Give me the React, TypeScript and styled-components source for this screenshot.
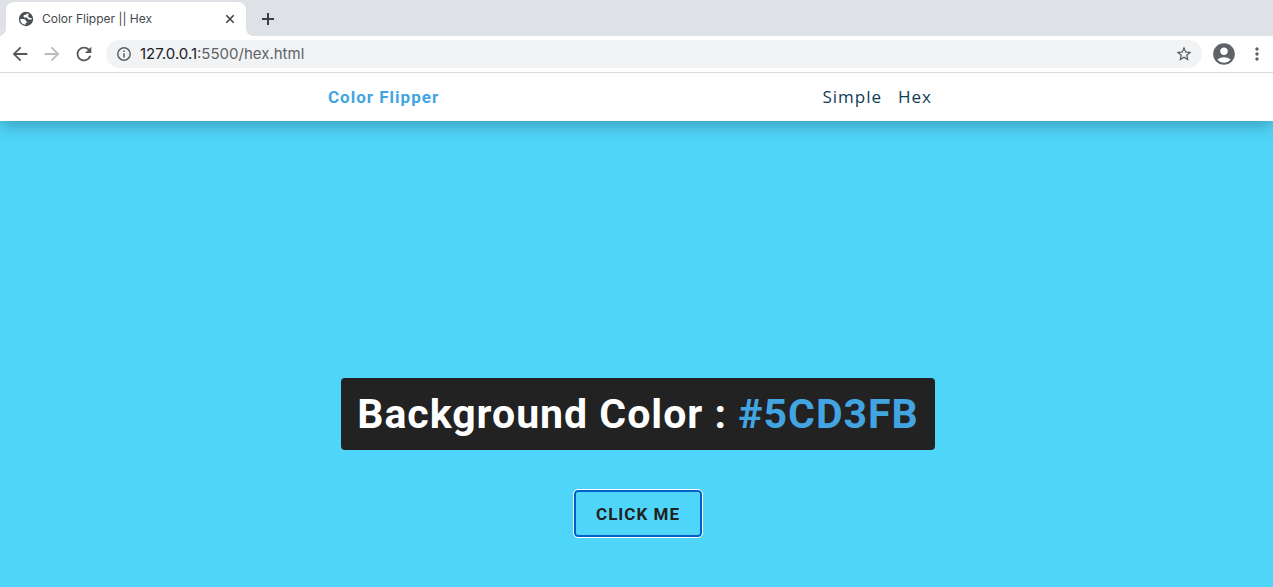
import React, { useState } from 'react';
import styled, { createGlobalStyle } from 'styled-components';
import {
  MdAccountCircle,
  MdArrowBack,
  MdArrowForward,
  MdMoreVert,
  MdRefresh,
  MdStarBorder,
} from 'react-icons/md';

const GlobalStyle = createGlobalStyle`
  *, *::before, *::after { box-sizing: border-box; }
  body { margin: 0; overflow: hidden; background: #50d5fa; }
  button, input { font: inherit; color: inherit; }
`;

const Window = styled.div`
  display: flex;
  flex-direction: column;
  min-height: 100vh;
  font-family: Inter, 'Liberation Sans', sans-serif;
`;

const TabStrip = styled.div`
  display: flex;
  align-items: flex-end;
  gap: 12px;
  height: 36px;
  padding-left: 6px;
  background: #dee1e6;
`;

const Tab = styled.div`
  position: relative;
  display: flex;
  align-items: center;
  gap: 8px;
  width: 240px;
  height: 34px;
  padding: 0 8px 0 12px;
  border-radius: 8px 8px 0 0;
  background: #fff;
  color: #45494d;
  font-size: 12px;
  line-height: 16px;

  &::before,
  &::after {
    content: '';
    position: absolute;
    bottom: 0;
    width: 8px;
    height: 8px;
  }
  &::before {
    right: 100%;
    background: radial-gradient(circle at 0 0, #dee1e6 8px, #fff 8px);
  }
  &::after {
    left: 100%;
    background: radial-gradient(circle at 100% 0, #dee1e6 8px, #fff 8px);
  }
`;

const TabTitle = styled.span`
  flex: 1;
  white-space: nowrap;
`;

const IconButton = styled.button<{ $size: number; $color?: string }>`
  display: flex;
  align-items: center;
  justify-content: center;
  flex: none;
  width: ${(p) => p.$size}px;
  height: ${(p) => p.$size}px;
  padding: 0;
  border: 0;
  background: none;
  color: ${(p) => p.$color ?? '#54585d'};

  svg { flex: none; }
`;

const NewTab = styled(IconButton)`
  align-self: center;
  margin-top: 2px;
`;

const Toolbar = styled.div`
  position: relative;
  z-index: 1;
  display: flex;
  align-items: center;
  height: 37px;
  padding: 0 8px 0 10px;
  border-bottom: 1px solid #dadce0;
  background: #fff;
`;

const ButtonGroup = styled.div`
  display: flex;
  align-items: center;
  gap: 12px;
`;

const AddressBar = styled.div`
  display: flex;
  align-items: center;
  flex: 1;
  height: 28px;
  margin: 0 9px 0 12px;
  padding: 0 8px 0 10px;
  border-radius: 14px;
  background: #f1f3f4;
  color: #5f6368;
  font-size: 15px;
  line-height: 20px;
`;

const Host = styled.label`
  margin-left: 8px;
  color: #202124;
`;

const PathInput = styled.input`
  flex: 1;
  min-width: 0;
  padding: 0;
  border: 0;
  outline: 0;
  background: none;
`;

const Nav = styled.nav`
  position: relative;
  padding-left: 3px;
  background: #fff;
  box-shadow: 0 5px 15px rgba(0, 0, 0, 0.25);
`;

const NavCenter = styled.div`
  display: flex;
  align-items: center;
  justify-content: space-between;
  width: 90vw;
  max-width: 620px;
  height: 48px;
  margin: 0 auto;
`;

const Brand = styled.h4`
  margin: 0;
  color: #42a5e1;
  font: 700 17px/20px Roboto, sans-serif;
  letter-spacing: 1px;
`;

const NavLinks = styled.ul`
  display: flex;
  gap: 16px;
  margin: 0;
  padding: 0 16px 0 0;
  list-style: none;
`;

const NavLink = styled.a`
  color: #0f3b57;
  font: 400 17px/24px 'Open Sans', sans-serif;
  letter-spacing: 1px;
  text-decoration: none;
`;

const Main = styled.main`
  display: flex;
  flex: 1;
  flex-direction: column;
  align-items: center;
  gap: 40px;
  padding: 257px 0 48px 3px;
  background: #50d5fa;
`;

const Heading = styled.h2`
  margin: 0;
  padding: 16px;
  border-radius: 4px;
  background: #222;
  color: #fff;
  font: 700 41px/40px Roboto, sans-serif;
  letter-spacing: 1px;
`;

const HexValue = styled.span`
  color: #42a5e1;
`;

const FlipButton = styled.button`
  height: 47px;
  padding: 0 20px;
  border: 2px solid #0060c8;
  border-radius: 4px;
  outline: 1px solid #fff;
  background: transparent;
  color: #222;
  font: 700 17px/20px Roboto, sans-serif;
  letter-spacing: 1px;
  text-transform: uppercase;
`;

const GlobeIcon = () => (
  <svg width="16" height="16" viewBox="0 0 16 16" aria-hidden="true">
    <circle cx="8" cy="8" r="7.2" fill="#4b4f54" />
    <path
      d="M8.6 2.4 C8.8 3.2 8.2 3.7 7.2 3.8 C6 3.9 5.4 4.6 5.5 5.5 C5.6 6.3 6.2 6.6 7.2 6.6 H8.6 C9.7 6.7 9.6 8.5 10.9 8.6 H13.6 C13.8 7.9 13.7 7.4 13.6 6.9 H12 C11 6.9 11 5.6 9.9 5.3 C9.4 5.1 9.6 4.7 10.1 4.4 C10.7 4 10.9 3.4 10.9 3 C10.2 2.6 9.4 2.4 8.6 2.4 Z"
      fill="#fff"
    />
    <path
      d="M2.3 8 H5.4 C7.2 8.1 8 9 8.1 10.4 H9.2 V11.8 H7.6 V13.7 C4.5 13.6 2.2 11.2 2.3 8 Z"
      fill="#fff"
    />
  </svg>
);

const CloseIcon = () => (
  <svg width="16" height="16" viewBox="0 0 16 16" aria-hidden="true">
    <path d="M4.3 4.3 L11.7 11.7 M11.7 4.3 L4.3 11.7" stroke="currentColor" strokeWidth="1.6" />
  </svg>
);

const PlusIcon = () => (
  <svg width="20" height="20" viewBox="0 0 20 20" aria-hidden="true">
    <path d="M10 4 V16 M4 10 H16" stroke="currentColor" strokeWidth="2" />
  </svg>
);

const InfoIcon = () => (
  <svg width="16" height="16" viewBox="0 0 16 16" fill="none" aria-hidden="true">
    <circle cx="8" cy="8" r="6.2" stroke="currentColor" strokeWidth="1.5" />
    <path d="M8 7.2 V11.4 M8 4.5 V6.1" stroke="currentColor" strokeWidth="1.6" />
  </svg>
);

export default function App() {
  const [path, setPath] = useState(':5500/hex.html');

  return (
    <Window>
      <GlobalStyle />
      <TabStrip>
        <Tab>
          <GlobeIcon />
          <TabTitle>Color Flipper || Hex</TabTitle>
          <IconButton $size={16} $color="#3c4043" aria-label="Close tab"><CloseIcon /></IconButton>
        </Tab>
        <NewTab $size={20} $color="#3c4043" aria-label="New tab"><PlusIcon /></NewTab>
      </TabStrip>
      <Toolbar>
        <ButtonGroup>
          <IconButton $size={20} aria-label="Back"><MdArrowBack size={22} /></IconButton>
          <IconButton $size={20} $color="#b9bbbe" aria-label="Forward"><MdArrowForward size={22} /></IconButton>
          <IconButton $size={20} aria-label="Reload"><MdRefresh size={22} /></IconButton>
        </ButtonGroup>
        <AddressBar>
          <InfoIcon />
          <Host htmlFor="address">127.0.0.1</Host>
          <PathInput id="address" value={path} onChange={(e) => setPath(e.target.value)} />
          <IconButton $size={20} aria-label="Bookmark"><MdStarBorder size={18} /></IconButton>
        </AddressBar>
        <ButtonGroup>
          <IconButton $size={26} $color="#5f6368" aria-label="Profile"><MdAccountCircle size={26} /></IconButton>
          <IconButton $size={16} $color="#5f6368" aria-label="Menu"><MdMoreVert size={20} /></IconButton>
        </ButtonGroup>
      </Toolbar>
      <Nav>
        <NavCenter>
          <Brand>Color Flipper</Brand>
          <NavLinks>
            <li><NavLink href="#simple">Simple</NavLink></li>
            <li><NavLink href="#hex">Hex</NavLink></li>
          </NavLinks>
        </NavCenter>
      </Nav>
      <Main>
        <Heading>Background Color : <HexValue>#5CD3FB</HexValue></Heading>
        <FlipButton type="button">Click me</FlipButton>
      </Main>
    </Window>
  );
}
